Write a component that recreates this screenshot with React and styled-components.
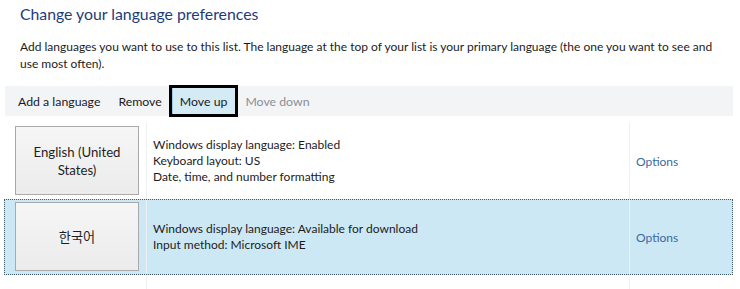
import React from "react";
import styled, { createGlobalStyle } from "styled-components";

const Global = createGlobalStyle`
  html, body { margin: 0; padding: 0; background: #ffffff; }
  body { font-family: Lato, "Noto Sans CJK KR", sans-serif; color: #1a1a1a; }
`;

const Page = styled.div`
  width: 740px;
  height: 289px;
  overflow: hidden;
  background: #fff;
`;

const Title = styled.h1`
  margin: 0;
  padding: 3px 0 0 20px;
  font-size: 15.8px;
  font-weight: 400;
  line-height: 22px;
  color: #1d3b7c;
`;

const Desc = styled.p`
  margin: 13px 0 0 0;
  padding: 0 20px;
  font-size: 12px;
  line-height: 17px;
  color: #1c1c1c;
`;

const Toolbar = styled.div`
  display: flex;
  align-items: center;
  height: 30px;
  margin: 14px 7px 0 5px;
  padding-left: 4px;
  background: #f3f4f6;
`;

const ToolItem = styled.div`
  display: flex;
  align-items: center;
  height: 28px;
  padding: 0 9px;
  font-size: 12.3px;
  color: ${(p) => (p.$disabled ? "#8a8f96" : "#1a1a1a")};
  background: ${(p) => (p.$active ? "#d4ebf6" : "transparent")};
  box-shadow: ${(p) => (p.$active ? "inset 2px 0 0 #9ccbe2" : "none")};
  outline: ${(p) => (p.$active ? "3px solid #000" : "none")};
  outline-offset: -1px;
`;

const List = styled.div`
  margin: 7px 7px 0 4px;
  display: flex;
  flex-direction: column;
`;

const Row = styled.div`
  display: grid;
  grid-template-columns: 143px 483px 1fr;
  height: ${(p) => (p.$empty ? "20px" : "76px")};
  box-sizing: border-box;
  background: ${(p) => (p.$selected ? "#cde8f5" : "transparent")};
  outline: ${(p) => (p.$selected ? "1px dotted #3d5a66" : "none")};
  outline-offset: -1px;
`;

const Cell = styled.div`
  display: flex;
  align-items: center;
  box-sizing: border-box;
  border-right: ${(p) => (p.$divider ? "1px solid #eef0f2" : "none")};
`;

const ButtonCell = styled(Cell)`
  align-items: flex-start;
  padding: 3px 0 0 11px;
`;

const LangButton = styled.div`
  width: 124px;
  height: 69px;
  box-sizing: border-box;
  border: 1px solid #a9a9a9;
  background: linear-gradient(#f6f6f6, #ebebeb);
  display: flex;
  align-items: center;
  justify-content: center;
  text-align: center;
  font-size: 13.2px;
  line-height: 18px;
  color: #1f1f1f;
  padding: 0 12px;
`;

const Details = styled(Cell)`
  flex-direction: column;
  align-items: flex-start;
  justify-content: center;
  padding: 0 0 1px 6px;
  font-size: 12px;
  line-height: 16px;
  color: #1c1c1c;
`;

const OptionsCell = styled(Cell)`
  padding-left: 6px;
  font-size: 12px;
  color: #3a6aa0;
`;

const langs = [
  {
    name: "English (United States)",
    lines: [
      "Windows display language: Enabled",
      "Keyboard layout: US",
      "Date, time, and number formatting",
    ],
  },
  {
    name: "한국어",
    selected: true,
    lines: ["Windows display language: Available for download", "Input method: Microsoft IME"],
  },
];

export default function App() {
  return (
    <Page>
      <Global />
      <Title>Change your language preferences</Title>
      <Desc>
        Add languages you want to use to this list. The language at the top of your list is your
        primary language (the one you want to see and use most often).
      </Desc>
      <Toolbar>
        <ToolItem>Add a language</ToolItem>
        <ToolItem>Remove</ToolItem>
        <ToolItem $active>Move up</ToolItem>
        <ToolItem $disabled>Move down</ToolItem>
      </Toolbar>
      <List>
        {langs.map((l) => (
          <Row key={l.name} $selected={l.selected}>
            <ButtonCell $divider>
              <LangButton>{l.name}</LangButton>
            </ButtonCell>
            <Details $divider>
              {l.lines.map((t) => (
                <div key={t}>{t}</div>
              ))}
            </Details>
            <OptionsCell>Options</OptionsCell>
          </Row>
        ))}
        <Row $empty>
          <Cell $divider />
          <Cell $divider />
          <Cell />
        </Row>
      </List>
    </Page>
  );
}
